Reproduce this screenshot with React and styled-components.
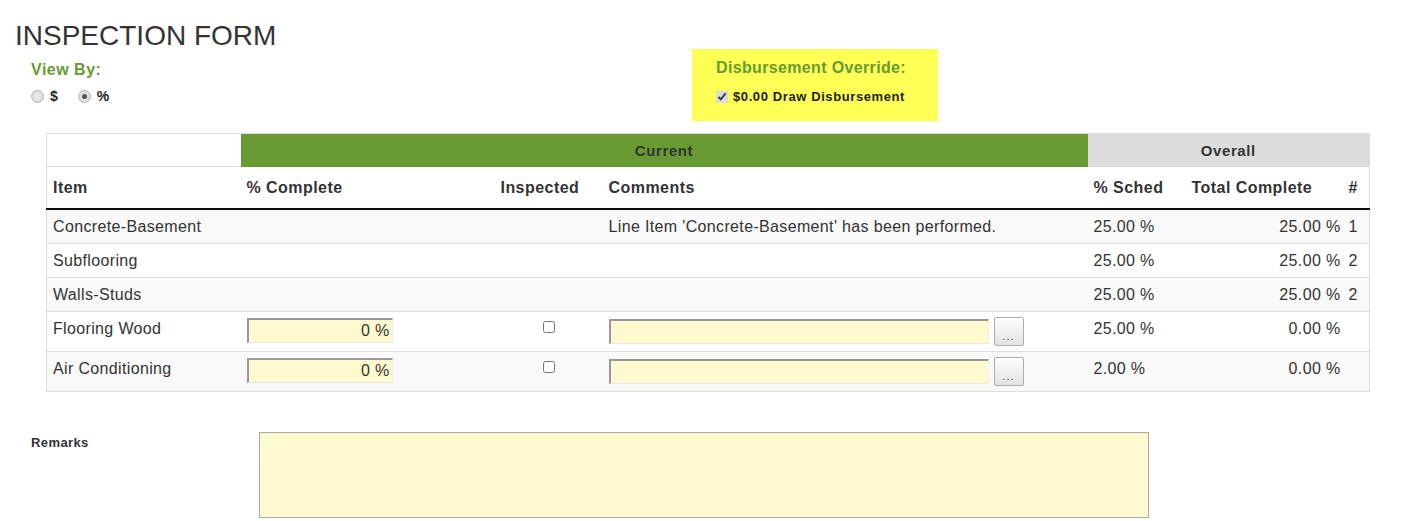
import React from "react";
import styled, { createGlobalStyle } from "styled-components";

const GlobalStyle = createGlobalStyle`
  body {
    margin: 0;
    background: #fff;
    font-family: "Liberation Sans", Arial, sans-serif;
    color: #333;
  }
`;

const Page = styled.div`
  padding-left: 15px;
`;

const Title = styled.h1`
  margin: 23px 0 0;
  font-size: 28px;
  line-height: 26px;
  font-weight: normal;
  color: #333;
`;

const TopRow = styled.div`
  display: flex;
  height: 72px;
`;

const ViewBy = styled.div`
  width: 661px;
  padding: 12px 0 0 16px;
`;

const GreenLabel = styled.div`
  color: #679a32;
  font-weight: bold;
  font-size: ${(props) => props.size || 15}px;
  line-height: 17px;
  letter-spacing: ${(props) => props.spacing || 0}px;
`;

const RadioRow = styled.div`
  display: flex;
  align-items: center;
  margin-top: 10px;
  font-size: 14px;
  font-weight: bold;
  line-height: 16px;
  color: #222;
`;

const RadioLabel = styled.label`
  display: flex;
  align-items: center;
  gap: 6px;
  margin-right: 20px;
`;

const Radio = styled.input`
  appearance: none;
  box-sizing: border-box;
  margin: 0;
  width: 13px;
  height: 13px;
  border-radius: 50%;
  border: 1px solid #b4b4b4;
  background: radial-gradient(circle, #e9e9e9 0%, #d9d9d9 100%);
  display: grid;
  place-items: center;

  &:checked::after {
    content: "";
    width: 5px;
    height: 5px;
    border-radius: 50%;
    background: #555;
  }
`;

const OverrideBox = styled.div`
  width: 246px;
  height: 72px;
  box-sizing: border-box;
  padding: 10px 0 0 24px;
  background: #ffff55;
`;

const CheckRow = styled.label`
  display: flex;
  align-items: center;
  margin-top: 13px;
  font-size: 13px;
  font-weight: bold;
  line-height: 15px;
  letter-spacing: 0.6px;
  color: #222;

  input {
    margin: 0 5px 0 0;
    width: 12px;
    height: 12px;
    accent-color: #dcdcdc;
  }
`;

const Table = styled.table`
  width: 1323px;
  margin: 12px 0 0 31px;
  table-layout: fixed;
  border-collapse: collapse;
  border: 1px solid #ddd;
  font-size: 16px;
  line-height: 17px;
`;

const GroupCell = styled.th`
  height: 17px;
  padding: 8px 6px 7px;
  font-size: 15px;
  font-weight: bold;
  letter-spacing: 0.6px;
  text-align: center;
  color: #333;
  background: ${(props) =>
    props.$variant === "current"
      ? "#679a32"
      : props.$variant === "overall"
      ? "#dddddd"
      : "#fff"};
  border-bottom: ${(props) =>
    props.$variant === "blank" ? "1px solid #ddd" : "none"};
`;

const HeadCell = styled.th`
  padding: 12px 6px 12px;
  text-align: left;
  font-weight: bold;
  letter-spacing: 0.45px;
  color: #333;
  white-space: nowrap;
  border-bottom: 2px solid #111;
`;

const Row = styled.tr`
  background: ${(props) => (props.$odd ? "#f9f9f9" : "#fff")};
`;

const Cell = styled.td`
  padding: ${(props) => props.$pad || "8px 6px"};
  vertical-align: top;
  border-top: 1px solid #ddd;
  color: #333;
  letter-spacing: 0.35px;
  white-space: nowrap;
  text-align: ${(props) => props.$align || "left"};
`;

const FieldInput = styled.input`
  box-sizing: border-box;
  width: ${(props) => props.$w}px;
  height: 25px;
  margin: 0;
  padding: 0 2px;
  font-family: "Liberation Sans", Arial, sans-serif;
  font-size: 16px;
  letter-spacing: 0.35px;
  color: #333;
  text-align: ${(props) => props.$align || "left"};
  background: #fef9cf;
  border-style: solid;
  border-width: 2px 1px 1px 2px;
  border-color: #999 #eee #e6e6e6 #999;
  outline: none;
`;

const Check = styled.input`
  margin: 3px 0 0;
  width: 12px;
  height: 12px;
`;

const CommentWrap = styled.div`
  display: flex;
  align-items: center;
  gap: 5px;
`;

const DotsButton = styled.button`
  width: 30px;
  height: 29px;
  padding: 8px 0 0;
  border: 1px solid #adadad;
  border-radius: 2px;
  background: linear-gradient(#fdfdfd, #e3e3e3);
  font-family: "Liberation Sans", Arial, sans-serif;
  font-size: 11px;
  color: #444;
  letter-spacing: 1px;
`;

const RemarksRow = styled.div`
  display: flex;
  margin-top: 40px;
`;

const RemarksLabel = styled.div`
  width: 228px;
  padding: 3px 0 0 16px;
  font-size: 13px;
  line-height: 15px;
  font-weight: bold;
  letter-spacing: 0.4px;
  color: #333;
`;

const RemarksArea = styled.textarea`
  box-sizing: border-box;
  width: 890px;
  height: 86px;
  margin: 0;
  border: 1px solid #aaa;
  background: #fef9cf;
  resize: none;
  outline: none;
`;

const columns = [194, 254, 108, 485, 98, 161, 23];

const rows = [
  {
    item: "Concrete-Basement",
    comment: "Line Item 'Concrete-Basement' has been performed.",
    sched: "25.00 %",
    total: "25.00 %",
    n: "1",
  },
  { item: "Subflooring", sched: "25.00 %", total: "25.00 %", n: "2" },
  { item: "Walls-Studs", sched: "25.00 %", total: "25.00 %", n: "2" },
  { item: "Flooring Wood", edit: true, sched: "25.00 %", total: "0.00 %" },
  { item: "Air Conditioning", edit: true, sched: "2.00 %", total: "0.00 %" },
];

function LineRow({ row, odd }) {
  return (
    <Row $odd={odd}>
      <Cell>{row.item}</Cell>
      {row.edit ? (
        <>
          <Cell $pad="6px 6px">
            <FieldInput $w={146} $align="right" defaultValue="0 %" />
          </Cell>
          <Cell $pad="6px 6px" $align="center">
            <Check type="checkbox" />
          </Cell>
          <Cell $pad="5px 6px">
            <CommentWrap>
              <FieldInput $w={380} />
              <DotsButton>...</DotsButton>
            </CommentWrap>
          </Cell>
        </>
      ) : (
        <>
          <Cell />
          <Cell />
          <Cell>{row.comment}</Cell>
        </>
      )}
      <Cell>{row.sched}</Cell>
      <Cell $align="right" $pad="8px 6px 8px 0">
        {row.total}
      </Cell>
      <Cell $pad="8px 2px">{row.n}</Cell>
    </Row>
  );
}

export default function App() {
  return (
    <Page>
      <GlobalStyle />
      <Title>INSPECTION FORM</Title>
      <TopRow>
        <ViewBy>
          <GreenLabel size={16} spacing={0.5}>
            View By:
          </GreenLabel>
          <RadioRow>
            <RadioLabel>
              <Radio type="radio" name="viewby" />$
            </RadioLabel>
            <RadioLabel>
              <Radio type="radio" name="viewby" defaultChecked />%
            </RadioLabel>
          </RadioRow>
        </ViewBy>
        <OverrideBox>
          <GreenLabel size={16} spacing={0.35}>
            Disbursement Override:
          </GreenLabel>
          <CheckRow>
            <input type="checkbox" defaultChecked />
            $0.00 Draw Disbursement
          </CheckRow>
        </OverrideBox>
      </TopRow>

      <Table>
        <colgroup>
          {columns.map((w, i) => (
            <col key={i} style={{ width: w }} />
          ))}
        </colgroup>
        <thead>
          <tr>
            <GroupCell $variant="blank" />
            <GroupCell $variant="current" colSpan={3}>
              Current
            </GroupCell>
            <GroupCell $variant="overall" colSpan={3}>
              Overall
            </GroupCell>
          </tr>
          <tr>
            <HeadCell>Item</HeadCell>
            <HeadCell>% Complete</HeadCell>
            <HeadCell>Inspected</HeadCell>
            <HeadCell>Comments</HeadCell>
            <HeadCell>% Sched</HeadCell>
            <HeadCell>Total Complete</HeadCell>
            <HeadCell style={{ paddingLeft: 2 }}>#</HeadCell>
          </tr>
        </thead>
        <tbody>
          {rows.map((row, i) => (
            <LineRow key={row.item} row={row} odd={i % 2 === 0} />
          ))}
        </tbody>
      </Table>

      <RemarksRow>
        <RemarksLabel>Remarks</RemarksLabel>
        <RemarksArea />
      </RemarksRow>
    </Page>
  );
}
